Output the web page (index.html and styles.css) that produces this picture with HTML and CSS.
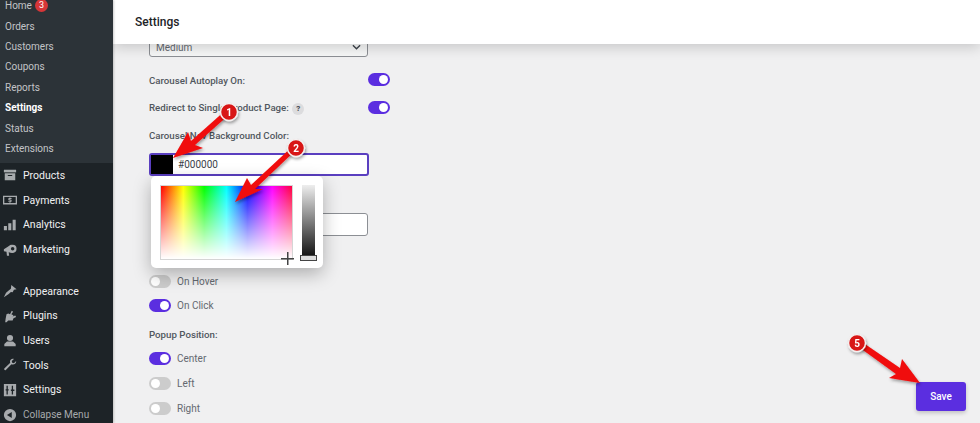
FILE: index.html
```html
<!DOCTYPE html>
<html lang="en">
<head>
    <meta charset="UTF-8">
    <meta name="viewport" content="width=device-width, initial-scale=1.0">
    <title>Settings</title>
    <link rel="stylesheet" href="styles.css">
</head>
<body>
    <div class="admin">
        <!-- Sidebar -->
        <nav class="sidebar">
            <ul class="submenu">
                <li>Home <span class="count">3</span></li>
                <li>Orders</li>
                <li>Customers</li>
                <li>Coupons</li>
                <li>Reports</li>
                <li class="current">Settings</li>
                <li>Status</li>
                <li>Extensions</li>
            </ul>
            <ul class="menu">
                <li>
                    <svg class="icon" viewBox="0 0 16 16"><path d="M1 2h14v3H1z"/><path d="M2 6h12v8H2zM5.500 8v1h5V8z" fill-rule="evenodd"/></svg>
                    Products
                </li>
                <li>
                    <svg class="icon" viewBox="0 0 16 16"><path d="M0 3h16v10H0zM1.500 4.500v7h13v-7z" fill-rule="evenodd"/><path d="M7.300 5h1.300v.8h1.200v1.100H7.600v.6h1.500l.7.6v1.700l-.7.6h-.5V11H7.300v-.6H6.100V9.300h2.300v-.7H6.800l-.7-.6V6.400l.7-.6h.5z"/></svg>
                    Payments
                </li>
                <li>
                    <svg class="icon" viewBox="0 0 16 16"><path d="M1 9h3.500v5H1zM6 6h3.500v8H6zM11 2h3.500v12H11z"/></svg>
                    Analytics
                </li>
                <li>
                    <svg class="icon" viewBox="0 0 16 16"><path d="M1 7l8-5 3 .5v9L9 11l-2.500-.5L7 14.500H4.500L4 10 1 9.500z"/><circle cx="11" cy="6.500" r="4.500"/><circle cx="11" cy="6.500" r="2" fill="#1d2327"/></svg>
                    Marketing
                </li>
                <li class="menu-gap">
                    <svg class="icon" viewBox="0 0 16 16"><path d="M9.500 1L15.500 6l-3 .5-1.500 3-2-.5-2.500 2.500L1 15l2.500-5 3-2.500 2.500-2z"/></svg>
                    Appearance
                </li>
                <li>
                    <svg class="icon" viewBox="0 0 16 16"><path d="M10 2l1.500 1-2 3 2.500 1-1 1.500 3-1 1 1.500-3 1.500-1 2.500H6l-2 2H2.500l.5-4 1-5 2-1 2 1z"/></svg>
                    Plugins
                </li>
                <li>
                    <svg class="icon" viewBox="0 0 16 16"><circle cx="8" cy="4.500" r="3.500"/><path d="M1.500 14v-2.500l3-3h7l3 3V14z"/></svg>
                    Users
                </li>
                <li>
                    <svg class="icon" viewBox="0 0 16 16"><path d="M15 3.500l-2.500 2.500-2-.5-.5-2L12.500 1C10.500.3 8.300 1.500 8 3.500c-.1.800 0 1.500.3 2L1.500 12c-.8 1 .7 2.500 1.700 1.700l6.500-6.500c2.800 1 5.900-1 5.300-3.700z"/></svg>
                    Tools
                </li>
                <li>
                    <svg class="icon" viewBox="0 0 16 16"><path d="M1 1h14v14H1zM4 3v4H3v1.500h1V13h1.500V8.500h1V7h-1V3zM10 3v4.500H9V9h1v4h1.500V9h1.500V7.500h-1.500V3z" fill-rule="evenodd"/></svg>
                    Settings
                </li>
                <li class="collapse">
                    <svg class="icon" viewBox="0 0 16 16"><path d="M8 1a7 7 0 1 0 0 14A7 7 0 0 0 8 1zm2 3.500v7L4.500 8z" fill-rule="evenodd"/></svg>
                    Collapse Menu
                </li>
            </ul>
        </nav>

        <!-- Main Area -->
        <div class="main">
            <header class="topbar">Settings</header>
            <div class="content">
                <div class="form">
                    <div class="select">
                        Medium
                        <svg class="chevron" viewBox="0 0 10 6"><path d="M1 1l4 4 4-4"/></svg>
                    </div>
                    <div class="row first-row">
                        <span class="label">Carousel Autoplay On:</span>
                        <span class="toggle on"></span>
                    </div>
                    <div class="row">
                        <span class="label">Redirect to Single Product Page: <span class="help">?</span></span>
                        <span class="toggle on"></span>
                    </div>
                    <div class="label field-label">Carousel Nav Background Color:</div>
                    <div class="color-field">
                        <span class="swatch"></span>
                        <span class="hex">#000000</span>
                        <div class="picker">
                            <div class="picker-map"></div>
                            <div class="picker-slider"><span class="picker-handle"></span></div>
                            <span class="picker-cross"></span>
                        </div>
                    </div>
                    <div class="blank-input"></div>

                    <div class="option on-hover"><span class="toggle"></span>On Hover</div>
                    <div class="option"><span class="toggle on"></span>On Click</div>
                    <div class="label group-label">Popup Position:</div>
                    <div class="option"><span class="toggle on"></span>Center</div>
                    <div class="option"><span class="toggle"></span>Left</div>
                    <div class="option"><span class="toggle"></span>Right</div>
                </div>
                <button class="save">Save</button>
            </div>
        </div>
    </div>

    <!-- Annotation arrows over the screenshot -->
    <svg class="marks" viewBox="0 0 980 423">
        <defs>
            <filter id="soft" x="-30%" y="-30%" width="160%" height="160%">
                <feDropShadow dx="1" dy="2" stdDeviation="1.500" flood-color="#000" flood-opacity=".35"/>
            </filter>
        </defs>
        <g filter="url(#soft)">
            <path class="arrow" d="M173 158L188 132 191 141 227 109 231 113 195 145 203 148z"/>
            <path class="arrow" d="M235 202L247 178 251 185 294 145 297 149 255 189 263 189z"/>
            <path class="arrow" d="M920 383L902 359 900 368 859 340 856 345 896 374 889 378z"/>
        </g>
        <g class="badge" filter="url(#soft)">
            <circle cx="229" cy="112" r="8.500"/>
            <text x="229" y="115.500">1</text>
            <circle cx="296" cy="148" r="8.500"/>
            <text x="296" y="151.500">2</text>
            <circle cx="857" cy="343" r="8.500"/>
            <text x="857" y="346.500">5</text>
        </g>
    </svg>
</body>
</html>
```

FILE: styles.css
```css
body {
    margin: 0;
    height: 423px;
    overflow: hidden;
    position: relative;
    font-family: Roboto, "Liberation Sans", sans-serif;
    font-size: 10px;
    color: #50575e;
    background-color: #f0f0f1;
}

ul {
    list-style: none;
    margin: 0;
    padding: 0;
}

.admin {
    display: flex;
    height: 423px;
}

/* Sidebar */
.sidebar {
    width: 113px;
    flex-shrink: 0;
    overflow: hidden;
    background-color: #1d2327;
    color: #f0f0f1;
    box-shadow: 1px 0 2px rgba(0, 0, 0, 0.2);
    position: relative;
    z-index: 3;
}

.submenu {
    margin-top: -4.500px;
    padding-bottom: 4.500px;
    background-color: #2c3338;
    color: #c3c4c7;
}

.submenu li {
    display: flex;
    align-items: center;
    gap: 3px;
    height: 20.4px;
    padding-left: 5px;
}

.submenu .current {
    color: #ffffff;
    font-weight: 700;
}

.count {
    width: 13px;
    height: 13px;
    border-radius: 50%;
    background-color: #d63638;
    color: #ffffff;
    font-size: 9px;
    line-height: 13px;
    text-align: center;
}

.menu li {
    display: flex;
    align-items: center;
    gap: 6px;
    height: 24.7px;
    padding-left: 3px;
    font-size: 10.500px;
}

.menu .menu-gap {
    margin-top: 17px;
}

.menu .collapse {
    color: #a7aaad;
    font-size: 10px;
}

.icon {
    width: 14px;
    height: 14px;
    flex-shrink: 0;
    fill: #a7aaad;
}

/* Main area */
.main {
    flex: 1;
    display: flex;
    flex-direction: column;
    min-width: 0;
}

.topbar {
    height: 44px;
    flex-shrink: 0;
    padding-left: 22px;
    background-color: #ffffff;
    box-shadow: 0 3px 14px rgba(0, 0, 0, 0.18);
    color: #1d2327;
    font-size: 12px;
    font-weight: 500;
    line-height: 44px;
    position: relative;
    z-index: 2;
}

.content {
    flex: 1;
    display: flex;
    justify-content: space-between;
    padding: 0 14px 12px 36px;
    overflow: hidden;
}

.form {
    width: 241px;
    margin-top: -10px;
}

.select {
    display: flex;
    align-items: center;
    justify-content: space-between;
    box-sizing: border-box;
    width: 219px;
    height: 23px;
    padding: 3px 6px 0;
    border: 1px solid #8c8f94;
    border-radius: 3px;
    background-color: #f6f7f7;
    color: #646970;
}

.chevron {
    width: 9px;
    height: 6px;
    fill: none;
    stroke: #3c434a;
    stroke-width: 1.500;
}

.row {
    display: flex;
    align-items: center;
    justify-content: space-between;
    height: 14px;
    margin-top: 14px;
}

.first-row {
    margin-top: 15px;
}

.label {
    font-size: 9.700px;
    font-weight: 500;
}

.row .label {
    margin-top: 2px;
}

.help {
    display: inline-block;
    width: 12px;
    height: 12px;
    border-radius: 50%;
    background-color: #dcdcde;
    color: #3c434a;
    font-size: 8px;
    line-height: 12px;
    text-align: center;
    font-weight: 700;
    margin-left: 1px;
}

.field-label {
    height: 12px;
    margin-top: 16px;
}

.toggle {
    display: inline-block;
    box-sizing: border-box;
    width: 22px;
    height: 13px;
    padding: 2px;
    border-radius: 7px;
    background-color: #cccccc;
    flex-shrink: 0;
}

.toggle::after {
    content: "";
    display: block;
    width: 9px;
    height: 9px;
    border-radius: 50%;
    background-color: #ffffff;
}

.toggle.on {
    background-color: #5b2ee0;
}

.toggle.on::after {
    margin-left: 9px;
}

.color-field {
    display: flex;
    align-items: center;
    box-sizing: border-box;
    position: relative;
    width: 220px;
    height: 23px;
    margin-top: 11px;
    border: 2px solid #5a3fc0;
    border-radius: 3px;
    background-color: #ffffff;
}

.swatch {
    width: 22px;
    height: 100%;
    background-color: #000000;
}

.hex {
    margin-left: 5px;
    margin-bottom: 1px;
    color: #3c434a;
}

.picker {
    position: absolute;
    top: 21px;
    left: 0;
    z-index: 1;
    display: flex;
    gap: 9px;
    box-sizing: border-box;
    width: 172px;
    height: 92px;
    padding: 9px 8px 8px 9px;
    border-radius: 5px;
    background-color: #ffffff;
    box-shadow: 0 6px 18px rgba(0, 0, 0, 0.28);
}

.picker-map {
    width: 133px;
    height: 75px;
    box-sizing: border-box;
    border: 1px solid #d5d5d5;
    background:
        linear-gradient(to bottom, rgba(255, 255, 255, 0), #ffffff),
        linear-gradient(to right, #ff0000, #ffff00 17%, #00ff00 33%, #00ffff 50%, #0000ff 66%, #ff00ff 85%, #ff0040);
}

.picker-slider {
    position: relative;
    width: 13px;
    height: 72px;
    background: linear-gradient(to bottom, #eeeeee, #111111);
}

.picker-handle {
    position: absolute;
    left: -2px;
    bottom: -4px;
    box-sizing: border-box;
    width: 17px;
    height: 6px;
    border: 1px solid #444444;
    background-color: #dddddd;
}

.picker-cross {
    position: absolute;
    left: 130px;
    top: 76px;
    width: 13px;
    height: 13px;
    background:
        linear-gradient(#444444, #444444) center / 13px 1.500px no-repeat,
        linear-gradient(#444444, #444444) center / 1.500px 13px no-repeat;
}

.blank-input {
    box-sizing: border-box;
    width: 215px;
    height: 23px;
    margin: 37px 0 0 4px;
    border: 1px solid #8c8f94;
    border-radius: 3px;
    background-color: #ffffff;
}

.option {
    display: flex;
    align-items: center;
    gap: 6px;
    height: 14px;
    margin-top: 10.750px;
    color: #646970;
}

.on-hover {
    margin-top: 38px;
}

.group-label {
    height: 12px;
    margin-top: 16px;
}

.group-label + .option {
    margin-top: 11px;
}

.save {
    align-self: flex-end;
    width: 50px;
    height: 29px;
    border: none;
    border-radius: 3px;
    background-color: #5b2ee0;
    box-shadow: 0 2px 4px rgba(0, 0, 0, 0.2);
    color: #ffffff;
    font-family: inherit;
    font-size: 10px;
    font-weight: 500;
}

/* Annotations */
.marks {
    position: absolute;
    top: 0;
    left: 0;
    width: 980px;
    height: 423px;
    z-index: 5;
    pointer-events: none;
}

.arrow {
    fill: #f00a0a;
}

.badge circle {
    fill: #d81515;
    stroke: #f4f0f0;
    stroke-width: 1.500;
}

.badge text {
    fill: #ffffff;
    font-size: 10px;
    font-weight: 700;
    text-anchor: middle;
}
```
